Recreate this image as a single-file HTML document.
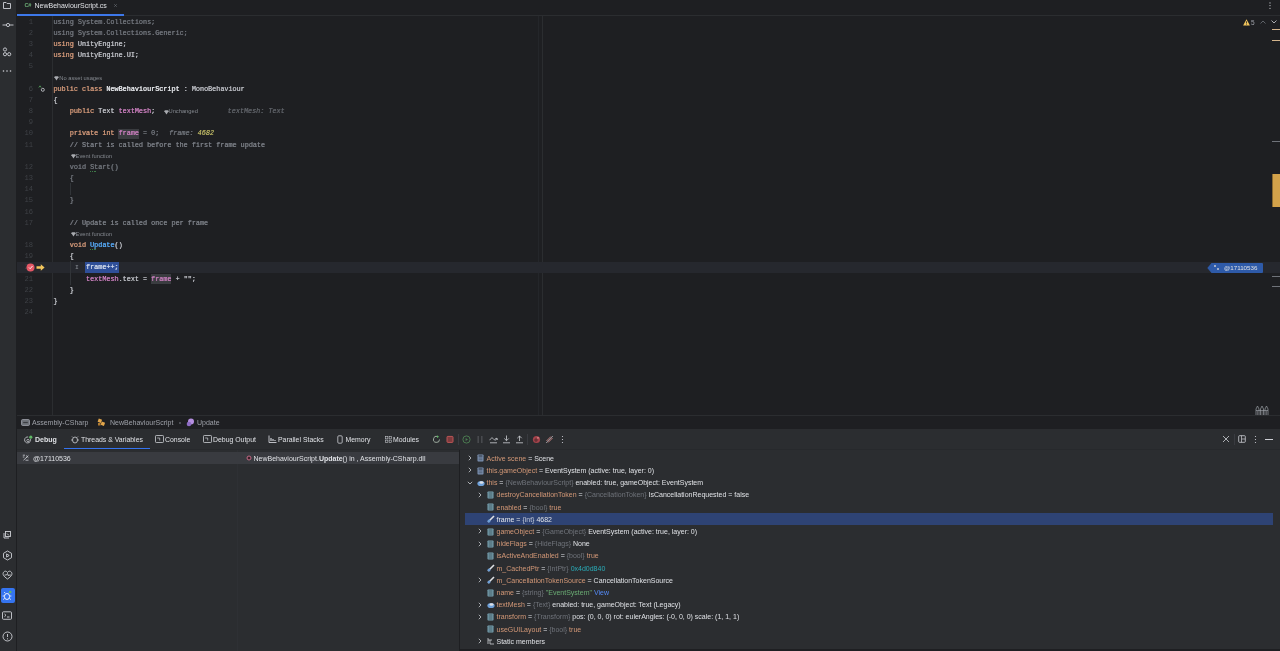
<!DOCTYPE html><html><head><meta charset="utf-8"><style>
*{margin:0;padding:0;box-sizing:border-box}
html,body{width:1280px;height:651px;overflow:hidden;background:#1e1f22;font-family:"Liberation Sans",sans-serif;color:#dfe1e5}
.a{position:absolute;white-space:pre}
.c{position:absolute;white-space:pre;font-family:"Liberation Mono",monospace;font-size:6.79px;line-height:11px;height:11px;color:#bcbec4;text-shadow:0.35px 0 0 currentColor}
.ln{position:absolute;white-space:pre;font-family:"Liberation Mono",monospace;font-size:7.1px;line-height:11px;color:#3e4146;text-align:right;width:30px}
.kw{color:#cf9677}.cm{color:#7a7e85}.fl{color:#c77dbb}.mt{color:#56a8f5}.nm{color:#2aacb8}.dim{color:#6f737a}.hv{color:#b3ae60}.sel{color:#cfd8ea}.br{color:#e6e8ec}.und{}
.h{position:absolute;white-space:pre;font-size:5.75px;color:#868a91;line-height:8px}
.u{position:absolute;white-space:pre;font-size:7px;line-height:9px;color:#dfe1e5}
.v{position:absolute;white-space:pre;font-size:7px;line-height:9px;color:#dfe1e5}
.vn{color:#d39877}.vt{color:#6f737a}.vs{color:#6aab73}.vh{color:#2aacb8}.vl{color:#548af7}
svg{position:absolute;overflow:visible}
</style></head><body><div id="root" style="position:absolute;left:0;top:0;width:1280px;height:651px;overflow:hidden;will-change:transform;background:#1e1f22">
<div class="a" style="left:0;top:0;width:16px;height:651px;background:#2b2d30"></div>
<div class="a" style="left:16px;top:0;width:1px;height:651px;background:#1e1f22"></div>
<svg style="left:2px;top:1px" width="10" height="9" viewBox="0 0 10 9"><path d="M1.5 1.5h2.6l1 1h3.4v5h-7z" fill="none" stroke="#ced0d6" stroke-width="0.9"/></svg>
<svg style="left:1.5px;top:21px" width="12" height="8" viewBox="0 0 12 8"><circle cx="6" cy="4" r="1.6" fill="none" stroke="#ced0d6" stroke-width="0.9"/><path d="M0.5 4h3.9M7.6 4h3.9" fill="none" stroke="#ced0d6" stroke-width="0.9"/></svg>
<svg style="left:2px;top:46.5px" width="10" height="10" viewBox="0 0 10 10"><circle cx="3" cy="2.5" r="1.6" fill="none" stroke="#ced0d6" stroke-width="0.9"/><circle cx="3" cy="7.2" r="1.6" fill="none" stroke="#ced0d6" stroke-width="0.9"/><circle cx="7.2" cy="7.2" r="1.6" fill="none" stroke="#ced0d6" stroke-width="0.9"/></svg>
<svg style="left:2px;top:69px" width="10" height="4" viewBox="0 0 10 4"><circle cx="1.5" cy="2" r="0.8" fill="#ced0d6"/><circle cx="5" cy="2" r="0.8" fill="#ced0d6"/><circle cx="8.5" cy="2" r="0.8" fill="#ced0d6"/></svg>
<svg style="left:2.0px;top:530px" width="10" height="10" viewBox="0 0 10 10"><path d="M2 3v5h5" fill="none" stroke="#ced0d6" stroke-width="0.9"/><rect x="3.5" y="1.5" width="5" height="5" fill="none" stroke="#ced0d6" stroke-width="0.9"/><path d="M5 3.5l2 2" fill="none" stroke="#ced0d6" stroke-width="0.9"/></svg>
<svg style="left:1.5px;top:550px" width="11" height="11" viewBox="0 0 11 11"><path d="M5.5 1l4 2.3v4.4l-4 2.3-4-2.3V3.3z" fill="none" stroke="#ced0d6" stroke-width="0.9"/><path d="M4.6 3.9v3.2l2.6-1.6z" fill="none" stroke="#ced0d6" stroke-width="0.9"/></svg>
<svg style="left:1.5px;top:570px" width="11" height="10" viewBox="0 0 11 10"><path d="M5.5 9C1 6 0.5 4 1.5 2.3 2.7 0.6 4.6 1 5.5 2.5 6.4 1 8.3 0.6 9.5 2.3 10.5 4 10 6 5.5 9z" fill="none" stroke="#ced0d6" stroke-width="0.9"/><path d="M2.5 5h2l1-1.5 1 2.5 0.8-1h1.5" fill="none" stroke="#ced0d6" stroke-width="0.9"/></svg>
<div class="a" style="left:1px;top:588px;width:14px;height:15px;background:#3574f0;border-radius:2px"></div>
<svg style="left:2.0px;top:590px" width="10" height="11" viewBox="0 0 10 11"><ellipse cx="5" cy="6.5" rx="2.6" ry="3" fill="none" stroke="#fff" stroke-width="0.9"/><path d="M3.2 3.2l-1-1.2M6.8 3.2l1-1.2M2.4 6H0.6M7.6 6h1.8M2.6 8.5l-1.5 1M7.4 8.5l1.5 1" fill="none" stroke="#fff" stroke-width="0.8"/><circle cx="8.2" cy="2" r="1.3" fill="#5fb865"/></svg>
<svg style="left:2.0px;top:611px" width="10" height="9" viewBox="0 0 10 9"><rect x="0.5" y="0.8" width="9" height="7.5" rx="1" fill="none" stroke="#ced0d6" stroke-width="0.9"/><path d="M2.5 3l1.5 1.3L2.5 5.6M5 6h2.5" fill="none" stroke="#ced0d6" stroke-width="0.9"/></svg>
<svg style="left:1.5px;top:631px" width="11" height="11" viewBox="0 0 11 11"><circle cx="5.5" cy="5.5" r="4.5" fill="none" stroke="#ced0d6" stroke-width="0.9"/><path d="M5.5 3v3" fill="none" stroke="#ced0d6" stroke-width="0.9"/><circle cx="5.5" cy="7.8" r="0.6" fill="#ced0d6"/></svg>
<div class="a" style="left:17px;top:15px;width:1263px;height:1px;background:#2b2d30"></div>
<div class="a" style="left:17px;top:14px;width:107px;height:2px;background:#3d78ea"></div>
<div class="u" style="left:24.5px;top:1px;font-size:5.6px;color:#6aab73;font-weight:bold;line-height:9px;letter-spacing:-0.3px">C#</div>
<div class="u" style="left:34.5px;top:0.5px;color:#dfe1e5">NewBehaviourScript.cs</div>
<svg style="left:113px;top:3px" width="5" height="5" viewBox="0 0 5 5"><path d="M1.2 1.2l2.6 2.6M3.8 1.2L1.2 3.8" stroke="#6f737a" stroke-width="0.6"/></svg>
<svg style="left:1268px;top:1px" width="4" height="9" viewBox="0 0 4 9"><circle cx="2" cy="1.9" r="0.6" fill="#ced0d6"/><circle cx="2" cy="4.6" r="0.6" fill="#ced0d6"/><circle cx="2" cy="7.3" r="0.6" fill="#ced0d6"/></svg>
<div class="a" style="left:52px;top:16px;width:1px;height:399px;background:#2b2d30"></div>
<div class="a" style="left:538px;top:16px;width:1px;height:399px;background:#24262a"></div>
<div class="a" style="left:542px;top:16px;width:1px;height:399px;background:#2b2d30"></div>
<div class="a" style="left:17px;top:262.43px;width:1263px;height:11px;background:#26282e"></div>
<div class="a" style="left:84.5px;top:262.13px;width:34px;height:11px;background:#2f4f98"></div>
<div class="a" style="left:118.48px;top:128.95px;width:20.37px;height:10px;background:#3a3c40"></div>
<div class="a" style="left:151.08px;top:274.09px;width:20.37px;height:10px;background:#3a3c40"></div>
<div class="a" style="left:70px;top:183.11px;width:1px;height:12.33px;background:#313438"></div>
<div class="a" style="left:70px;top:261.26px;width:1px;height:23.50px;background:#313438"></div>
<div class="ln" style="left:3px;top:16.80px">1</div>
<div class="c" style="left:53.3px;top:16.80px"><span class="dim">using System.Collections;</span></div>
<div class="ln" style="left:3px;top:27.97px">2</div>
<div class="c" style="left:53.3px;top:27.97px"><span class="dim">using System.Collections.Generic;</span></div>
<div class="ln" style="left:3px;top:39.13px">3</div>
<div class="c" style="left:53.3px;top:39.13px"><span class="kw">using</span> UnityEngine;</div>
<div class="ln" style="left:3px;top:50.30px">4</div>
<div class="c" style="left:53.3px;top:50.30px"><span class="kw">using</span> UnityEngine.UI;</div>
<div class="ln" style="left:3px;top:61.46px">5</div>
<div class="c" style="left:53.3px;top:61.46px"></div>
<div class="ln" style="left:3px;top:83.79px">6</div>
<div class="c" style="left:53.3px;top:83.79px"><span class="kw">public class</span> <span class="br">NewBehaviourScript</span> : MonoBehaviour</div>
<div class="ln" style="left:3px;top:94.95px">7</div>
<div class="c" style="left:53.3px;top:94.95px">{</div>
<div class="ln" style="left:3px;top:106.12px">8</div>
<div class="c" style="left:53.3px;top:106.12px">    <span class="kw">public</span> Text <span class="fl">textMesh</span>;</div>
<div class="ln" style="left:3px;top:117.28px">9</div>
<div class="c" style="left:53.3px;top:117.28px"></div>
<div class="ln" style="left:3px;top:128.45px">10</div>
<div class="c" style="left:53.3px;top:128.45px">    <span class="kw">private int</span> <span class="fl">frame</span><span class="dim"> = 0;</span></div>
<div class="ln" style="left:3px;top:139.62px">11</div>
<div class="c" style="left:53.3px;top:139.62px">    <span class="cm">// Start is called before the first frame update</span></div>
<div class="ln" style="left:3px;top:161.94px">12</div>
<div class="c" style="left:53.3px;top:161.94px">    <span class="dim">void </span><span class="dim und">Start</span><span class="dim">()</span></div>
<div class="ln" style="left:3px;top:173.11px">13</div>
<div class="c" style="left:53.3px;top:173.11px">    <span class="dim">{</span></div>
<div class="ln" style="left:3px;top:184.28px">14</div>
<div class="c" style="left:53.3px;top:184.28px"></div>
<div class="ln" style="left:3px;top:195.44px">15</div>
<div class="c" style="left:53.3px;top:195.44px">    <span class="dim">}</span></div>
<div class="ln" style="left:3px;top:206.60px">16</div>
<div class="c" style="left:53.3px;top:206.60px"></div>
<div class="ln" style="left:3px;top:217.77px">17</div>
<div class="c" style="left:53.3px;top:217.77px">    <span class="cm">// Update is called once per frame</span></div>
<div class="ln" style="left:3px;top:240.10px">18</div>
<div class="c" style="left:53.3px;top:240.10px">    <span class="kw">void</span> <span class="mt und">Update</span>()</div>
<div class="ln" style="left:3px;top:251.26px">19</div>
<div class="c" style="left:53.3px;top:251.26px">    {</div>
<div class="ln" style="left:3px;top:262.43px">20</div>
<div class="c" style="left:53.3px;top:262.43px">        <span class="sel">frame++;</span></div>
<div class="ln" style="left:3px;top:273.59px">21</div>
<div class="c" style="left:53.3px;top:273.59px">        <span class="fl">textMesh</span>.text = <span class="fl">frame</span> + &quot;&quot;;</div>
<div class="ln" style="left:3px;top:284.76px">22</div>
<div class="c" style="left:53.3px;top:284.76px">    }</div>
<div class="ln" style="left:3px;top:295.93px">23</div>
<div class="c" style="left:53.3px;top:295.93px">}</div>
<div class="ln" style="left:3px;top:307.09px">24</div>
<div class="c" style="left:53.3px;top:307.09px"></div>
<div class="a" style="left:90.47px;top:170.64px;width:0.9px;height:0.9px;background:#3f7a48"></div>
<div class="a" style="left:92.07px;top:170.64px;width:0.9px;height:0.9px;background:#3f7a48"></div>
<div class="a" style="left:93.67px;top:170.64px;width:0.9px;height:0.9px;background:#3f7a48"></div>
<div class="a" style="left:95.27px;top:170.64px;width:0.9px;height:0.9px;background:#3f7a48"></div>
<div class="a" style="left:90.47px;top:248.80px;width:0.9px;height:0.9px;background:#3f7a48"></div>
<div class="a" style="left:92.07px;top:248.80px;width:0.9px;height:0.9px;background:#3f7a48"></div>
<div class="a" style="left:93.67px;top:248.80px;width:0.9px;height:0.9px;background:#3f7a48"></div>
<div class="a" style="left:95.27px;top:248.80px;width:0.9px;height:0.9px;background:#3f7a48"></div>
<svg style="left:54.3px;top:76.12px" width="5" height="5" viewBox="0 0 5 5"><path d="M0.4 1.2Q0.4 0.3 1.3 0.3H3.7Q4.6 0.3 4.6 1.2L2.5 4.6z" fill="#a9abb0"/></svg>
<div class="h" style="left:59.30px;top:73.83px">No asset usages</div>
<svg style="left:70.596px;top:154.28px" width="5" height="5" viewBox="0 0 5 5"><path d="M0.4 1.2Q0.4 0.3 1.3 0.3H3.7Q4.6 0.3 4.6 1.2L2.5 4.6z" fill="#a9abb0"/></svg>
<div class="h" style="left:75.60px;top:151.98px">Event function</div>
<svg style="left:70.596px;top:232.44px" width="5" height="5" viewBox="0 0 5 5"><path d="M0.4 1.2Q0.4 0.3 1.3 0.3H3.7Q4.6 0.3 4.6 1.2L2.5 4.6z" fill="#a9abb0"/></svg>
<div class="h" style="left:75.60px;top:230.13px">Event function</div>
<svg style="left:163.5px;top:109.62px" width="5" height="5" viewBox="0 0 5 5"><path d="M0.4 1.2Q0.4 0.3 1.3 0.3H3.7Q4.6 0.3 4.6 1.2L2.5 4.6z" fill="#a9abb0"/></svg>
<div class="h" style="left:168.5px;top:107.32px">Unchanged</div>
<div class="c" style="left:227.5px;top:106.12px;color:#5d6066;font-style:italic">textMesh: Text</div>
<div class="c" style="left:169px;top:128.45px;color:#6f737a;font-style:italic">frame: <span class="hv">4682</span></div>
<svg style="left:38px;top:85.29px" width="7" height="7" viewBox="0 0 7 7"><circle cx="4.8" cy="4.8" r="1.5" fill="none" stroke="#ced0d6" stroke-width="0.8"/><path d="M0.8 2.5L2 0.8 3.2 2.5" fill="none" stroke="#5fb865" stroke-width="0.7"/></svg>
<svg style="left:26px;top:263.43px" width="9" height="9" viewBox="0 0 9 9"><circle cx="4.5" cy="4.5" r="4" fill="#e55765"/><path d="M3 4.5l1.2 1.2L6.5 3" stroke="#fff" stroke-width="0.9" fill="none"/></svg>
<svg style="left:36px;top:264.43px" width="9" height="7" viewBox="0 0 9 7"><path d="M0.5 2.3h4.3V0.3L8.6 3.5 4.8 6.7V4.7H0.5z" fill="#f2c55c"/></svg>
<div class="c" style="left:74.89px;top:262.43px;color:#6f737a;font-size:6px">I</div>
<div class="a" style="left:1212px;top:262.93px;width:51px;height:10px;background:#2e5aa8;border-radius:1px"></div>
<svg style="left:1207px;top:262.93px" width="6" height="10" viewBox="0 0 6 10"><path d="M6 0H4.5L0.3 5 4.5 10H6z" fill="#2e5aa8"/></svg>
<div class="u" style="left:1224px;top:263.13px;font-size:6.2px;color:#dfe1e5">@17110536</div>
<svg style="left:1213px;top:264.43px" width="7" height="7" viewBox="0 0 7 7"><path d="M1 1l2 2M3 1L1 3M4 4l2 2M6 4L4 6" stroke="#ced0d6" stroke-width="0.7"/></svg>
<svg style="left:1243px;top:19px" width="7" height="7" viewBox="0 0 7 7"><path d="M3.5 0.3L6.9 6.5H0.1z" fill="#f2c55c"/><path d="M3.5 2.3v2.2" stroke="#1e1f22" stroke-width="0.8"/><circle cx="3.5" cy="5.5" r="0.4" fill="#1e1f22"/></svg>
<div class="u" style="left:1251px;top:18px;font-size:6.5px;color:#9da0a8">5</div>
<svg style="left:1260px;top:20px" width="6" height="4" viewBox="0 0 6 4"><path d="M0.5 3.5L3 1l2.5 2.5" stroke="#6f737a" stroke-width="0.8" fill="none"/></svg>
<svg style="left:1271px;top:20px" width="6" height="4" viewBox="0 0 6 4"><path d="M0.5 0.5L3 3l2.5-2.5" stroke="#ced0d6" stroke-width="0.8" fill="none"/></svg>
<div class="a" style="left:1272px;top:29px;width:8px;height:1px;background:#d4b48c"></div>
<div class="a" style="left:1272px;top:40px;width:8px;height:1px;background:#d4b48c"></div>
<div class="a" style="left:1272px;top:174px;width:8px;height:33px;background:#d3a24a;border-left:1px solid #8a6a30"></div>
<div class="a" style="left:1272px;top:141px;width:8px;height:1px;background:#6f737a"></div>
<div class="a" style="left:1272px;top:276px;width:8px;height:1px;background:#6f737a"></div>
<div class="a" style="left:1272px;top:286px;width:8px;height:1px;background:#6f737a"></div>
<svg style="left:1254.5px;top:405px" width="14" height="10" viewBox="0 0 14 10"><path d="M1 10V4L2.5 1 4 4v6M5.5 10V4L7 1 8.5 4v6M10 10V4l1.5-3L13 4v6M1 5.5h12" fill="none" stroke="#9a9da3" stroke-width="0.7"/><path d="M2.5 6v4M7 6v4M11.5 6v4" stroke="#9a9da3" stroke-width="0.5"/></svg>
<div class="a" style="left:17px;top:415px;width:1263px;height:1px;background:#2b2d30"></div>
<svg style="left:21px;top:419px" width="9" height="7" viewBox="0 0 9 7"><rect x="0.5" y="0.5" width="8" height="6" rx="1.2" fill="#6f737a" stroke="#9da0a8" stroke-width="0.8"/><path d="M2.2 3.5h4.6" stroke="#3a3c40" stroke-width="1.2"/></svg>
<div class="u" style="left:32px;top:418px;color:#9da0a8">Assembly-CSharp</div>
<svg style="left:97px;top:418px" width="9" height="9" viewBox="0 0 9 9"><rect x="1" y="1" width="3.5" height="3.5" fill="#e3a64b" transform="rotate(20 3 3)"/><rect x="4" y="4" width="3.5" height="3.5" fill="#e3a64b" transform="rotate(20 6 6)"/><rect x="1" y="5" width="2.5" height="2.5" fill="#b07a30"/></svg>
<div class="u" style="left:110px;top:418px;color:#9da0a8">NewBehaviourScript</div>
<div class="a" style="left:179px;top:422px;width:1.5px;height:1.5px;background:#4b4e54"></div>
<svg style="left:186px;top:418px" width="9" height="9" viewBox="0 0 9 9"><circle cx="5" cy="3.5" r="3" fill="#b58fe0"/><circle cx="3" cy="6" r="2.3" fill="#8d6cc4"/></svg>
<div class="u" style="left:197px;top:418px;color:#9da0a8">Update</div>
<div class="a" style="left:17px;top:428px;width:1263px;height:223px;background:#2b2d30"></div>
<div class="a" style="left:17px;top:428px;width:1263px;height:1px;background:#1e1f22"></div>
<svg style="left:24px;top:434.5px" width="9" height="9" viewBox="0 0 9 9"><path d="M6.5 4.2A3 3 0 1 1 4.2 2" fill="none" stroke="#ced0d6" stroke-width="0.8"/><circle cx="4" cy="5.5" r="1.2" fill="none" stroke="#ced0d6" stroke-width="0.7"/><circle cx="6.8" cy="2.2" r="1.6" fill="#5fb865"/></svg>
<div class="u" style="left:35px;top:435px;font-weight:bold;color:#dfe1e5">Debug</div>
<svg style="left:71px;top:435px" width="8" height="9" viewBox="0 0 8 9"><ellipse cx="4" cy="5" rx="2.5" ry="3" fill="none" stroke="#ced0d6" stroke-width="0.8"/><path d="M2 2.5L1 1.5M6 2.5l1-1M1.5 5H0M6.5 5H8" stroke="#ced0d6" stroke-width="0.7"/></svg>
<div class="u" style="left:81px;top:435px;font-size:6.9px">Threads &amp; Variables</div>
<div class="a" style="left:64px;top:448px;width:86px;height:2px;background:#3574f0"></div>
<svg style="left:155px;top:435px" width="9" height="8" viewBox="0 0 9 8"><rect x="0.5" y="0.5" width="8" height="7" rx="0.8" fill="none" stroke="#ced0d6" stroke-width="0.8"/><path d="M2.2 3h2.5v2.5" stroke="#ced0d6" stroke-width="0.7" fill="none"/></svg>
<div class="u" style="left:165px;top:435px;font-size:6.9px">Console</div>
<svg style="left:202.5px;top:435px" width="9" height="8" viewBox="0 0 9 8"><rect x="0.5" y="0.5" width="8" height="7" rx="0.8" fill="none" stroke="#ced0d6" stroke-width="0.8"/><path d="M2.2 3h2.5v2.5" stroke="#ced0d6" stroke-width="0.7" fill="none"/></svg>
<div class="u" style="left:213px;top:435px;font-size:6.9px">Debug Output</div>
<svg style="left:268px;top:435px" width="9" height="8" viewBox="0 0 9 8"><path d="M1 0.5v7h7.5" stroke="#ced0d6" stroke-width="0.9" fill="none"/><path d="M3 3v3M5 4v2M7 5v1" stroke="#ced0d6" stroke-width="1.2"/></svg>
<div class="u" style="left:278px;top:435px;font-size:6.9px">Parallel Stacks</div>
<svg style="left:337px;top:435px" width="6" height="9" viewBox="0 0 6 9"><rect x="0.8" y="0.8" width="4.4" height="7.4" rx="1" fill="none" stroke="#ced0d6" stroke-width="0.8"/></svg>
<div class="u" style="left:345.5px;top:435px;font-size:6.9px">Memory</div>
<svg style="left:384.5px;top:436px" width="7" height="7" viewBox="0 0 9 9"><rect x="0.7" y="0.7" width="3" height="3" fill="none" stroke="#ced0d6" stroke-width="0.7"/><rect x="5.3" y="0.7" width="3" height="3" fill="none" stroke="#ced0d6" stroke-width="0.7"/><rect x="0.7" y="5.3" width="3" height="3" fill="none" stroke="#ced0d6" stroke-width="0.7"/><rect x="5.3" y="5.3" width="3" height="3" fill="none" stroke="#ced0d6" stroke-width="0.7"/></svg>
<div class="u" style="left:393px;top:435px;font-size:6.9px">Modules</div>
<svg style="left:432px;top:435px" width="9" height="9" viewBox="0 0 9 9"><path d="M7.5 4.5A3 3 0 1 1 5.5 1.6" fill="none" stroke="#a9b8aa" stroke-width="0.9"/><path d="M5 0.2l2 1.5-2 1.3z" fill="#5fb865"/></svg>
<svg style="left:446px;top:435px" width="8" height="9" viewBox="0 0 8 9"><rect x="1" y="1.4" width="6" height="6" rx="0.8" fill="#7d3a3d" stroke="#c75a5a" stroke-width="0.9"/></svg>
<div class="a" style="left:458px;top:434px;width:1px;height:11px;background:#393b40"></div>
<svg style="left:462px;top:435px" width="9" height="9" viewBox="0 0 9 9"><circle cx="4.5" cy="4.5" r="3.6" fill="none" stroke="#4a7a50" stroke-width="1"/><path d="M3.6 3v3l2.4-1.5z" fill="#4a7a50"/></svg>
<svg style="left:476px;top:435px" width="8" height="9" viewBox="0 0 8 9"><path d="M2.2 1v7M5.8 1v7" stroke="#4a4c50" stroke-width="1.5"/></svg>
<svg style="left:489px;top:435px" width="9" height="9" viewBox="0 0 9 9"><path d="M0.8 5.2C2 2.5 3.5 2.5 4.5 4S7 5.5 8 3.5" fill="none" stroke="#ced0d6" stroke-width="0.8"/><path d="M6.3 3.6L8 3.3 8.4 5" fill="none" stroke="#ced0d6" stroke-width="0.8"/><path d="M1 7.8h7" fill="none" stroke="#ced0d6" stroke-width="0.8"/></svg>
<svg style="left:502px;top:435px" width="9" height="9" viewBox="0 0 9 9"><path d="M4.5 0.5v5M2.3 3.5l2.2 2.2 2.2-2.2M1 7.8h7" fill="none" stroke="#ced0d6" stroke-width="0.8"/></svg>
<svg style="left:515px;top:435px" width="9" height="9" viewBox="0 0 9 9"><path d="M4.5 6V1M2.3 3.2L4.5 1l2.2 2.2M1 7.8h7" fill="none" stroke="#ced0d6" stroke-width="0.8"/></svg>
<div class="a" style="left:527px;top:434px;width:1px;height:11px;background:#393b40"></div>
<svg style="left:532px;top:435px" width="9" height="9" viewBox="0 0 9 9"><circle cx="4.5" cy="4.5" r="3.6" fill="#a4434b"/><circle cx="4" cy="5" r="1.5" fill="#3a2226"/><circle cx="4" cy="5" r="0.7" fill="#c44a52"/><circle cx="6" cy="2.8" r="0.9" fill="#d98a8a"/></svg>
<svg style="left:545px;top:435px" width="9" height="9" viewBox="0 0 9 9"><path d="M1.5 6l4.5-4.5M3 7.5l4.5-4.5" stroke="#d98a8a" stroke-width="0.9"/><path d="M1 8L8 1" stroke="#ced0d6" stroke-width="0.6"/></svg>
<svg style="left:561px;top:435px" width="3" height="9" viewBox="0 0 3 9"><circle cx="1.5" cy="1.5" r="0.6" fill="#ced0d6"/><circle cx="1.5" cy="4.5" r="0.6" fill="#ced0d6"/><circle cx="1.5" cy="7.5" r="0.6" fill="#ced0d6"/></svg>
<svg style="left:1222px;top:435px" width="8" height="8" viewBox="0 0 8 8"><path d="M1 1l6 6M7 1L1 7" stroke="#ced0d6" stroke-width="0.8"/></svg>
<div class="a" style="left:1234px;top:434px;width:1px;height:11px;background:#393b40"></div>
<svg style="left:1238px;top:435px" width="8" height="8" viewBox="0 0 8 8"><rect x="0.7" y="0.7" width="6.6" height="6.6" rx="0.8" fill="none" stroke="#ced0d6" stroke-width="0.8"/><path d="M3.5 0.7v6.6M3.5 4h3.8" stroke="#ced0d6" stroke-width="0.7"/></svg>
<svg style="left:1254px;top:435px" width="3" height="9" viewBox="0 0 3 9"><circle cx="1.5" cy="1.5" r="0.6" fill="#ced0d6"/><circle cx="1.5" cy="4.5" r="0.6" fill="#ced0d6"/><circle cx="1.5" cy="7.5" r="0.6" fill="#ced0d6"/></svg>
<div class="a" style="left:1265px;top:439px;width:8px;height:1px;background:#ced0d6"></div>
<div class="a" style="left:17px;top:449px;width:1263px;height:1px;background:#27292c"></div>
<div class="a" style="left:17px;top:450px;width:1263px;height:1px;background:#2b2d30"></div>
<div class="a" style="left:237px;top:450px;width:1px;height:201px;background:#2e3034"></div>
<div class="a" style="left:459px;top:450px;width:1px;height:201px;background:#1e1f22"></div>
<div class="a" style="left:17px;top:452px;width:442px;height:12px;background:#393b40"></div>
<svg style="left:22px;top:454px" width="7" height="7" viewBox="0 0 7 7"><path d="M0.8 1.2h2.2M0.8 3h1.6M4.2 1.5l2.2 2.2M6.4 1.5L4.2 3.7M1.5 6.2L5.5 2.5M3.5 6.2h3" stroke="#ced0d6" stroke-width="0.8"/></svg>
<div class="u" style="left:33px;top:453.5px">@17110536</div>
<svg style="left:246px;top:455px" width="6" height="6" viewBox="0 0 6 6"><circle cx="3" cy="3" r="2" fill="#3a1f28" stroke="#c26a86" stroke-width="1"/></svg>
<div class="u" style="left:253.5px;top:453.5px">NewBehaviourScript.<b>Update</b>() in , Assembly-CSharp.dll</div>
<svg style="left:468px;top:455.20px" width="4" height="6" viewBox="0 0 4 6"><path d="M0.8 0.8L3 3 0.8 5.2" fill="none" stroke="#ced0d6" stroke-width="0.8"/></svg>
<svg style="left:476.5px;top:454.40px" width="7" height="8" viewBox="0 0 7 8"><rect x="0.5" y="0.5" width="6" height="7" rx="0.7" fill="#7d93b3"/><rect x="1.5" y="1.3" width="4" height="1.4" fill="#3c4656"/><path d="M1.5 4h4M1.5 5.8h4" stroke="#3c4656" stroke-width="0.7"/></svg>
<div class="v" style="left:486.5px;top:453.70px"><span class="vn" style="">Active scene</span> = Scene</div>
<svg style="left:468px;top:467.40px" width="4" height="6" viewBox="0 0 4 6"><path d="M0.8 0.8L3 3 0.8 5.2" fill="none" stroke="#ced0d6" stroke-width="0.8"/></svg>
<svg style="left:476.5px;top:466.60px" width="7" height="8" viewBox="0 0 7 8"><rect x="0.5" y="0.5" width="6" height="7" rx="0.7" fill="#7d93b3"/><rect x="1.5" y="1.3" width="4" height="1.4" fill="#3c4656"/><path d="M1.5 4h4M1.5 5.8h4" stroke="#3c4656" stroke-width="0.7"/></svg>
<div class="v" style="left:486.5px;top:465.90px"><span class="vn" style="">this.gameObject</span> = EventSystem (active: true, layer: 0)</div>
<svg style="left:467px;top:480.60px" width="6" height="4" viewBox="0 0 6 4"><path d="M0.8 0.8L3 3 5.2 0.8" fill="none" stroke="#ced0d6" stroke-width="0.8"/></svg>
<svg style="left:477px;top:478.60px" width="8" height="8" viewBox="0 0 8 8"><ellipse cx="4" cy="4.5" rx="3.6" ry="2.6" fill="#6ea0d8"/><ellipse cx="4.5" cy="3.5" rx="2" ry="1.2" fill="#dfe1e5"/></svg>
<div class="v" style="left:486.5px;top:478.10px"><span class="vn" style="">this</span> = <span class="vt" style="">{NewBehaviourScript}</span> enabled: true, gameObject: EventSystem</div>
<svg style="left:478px;top:491.80px" width="4" height="6" viewBox="0 0 4 6"><path d="M0.8 0.8L3 3 0.8 5.2" fill="none" stroke="#ced0d6" stroke-width="0.8"/></svg>
<svg style="left:486.5px;top:491.00px" width="7" height="8" viewBox="0 0 7 8"><rect x="0.5" y="0.5" width="6" height="7" rx="0.7" fill="#78a3b2"/><path d="M1.5 2h4M1.5 4h4M1.5 6h4" stroke="#34444c" stroke-width="0.8"/></svg>
<div class="v" style="left:496.5px;top:490.30px"><span class="vn" style="">destroyCancellationToken</span> = <span class="vt" style="">{CancellationToken}</span> IsCancellationRequested = false</div>
<svg style="left:486.5px;top:503.20px" width="7" height="8" viewBox="0 0 7 8"><rect x="0.5" y="0.5" width="6" height="7" rx="0.7" fill="#78a3b2"/><path d="M1.5 2h4M1.5 4h4M1.5 6h4" stroke="#34444c" stroke-width="0.8"/></svg>
<div class="v" style="left:496.5px;top:502.50px"><span class="vn" style="">enabled</span> = <span class="vt" style="">{bool}</span> <span class="vn">true</span></div>
<div class="a" style="left:465px;top:512.50px;width:808px;height:12.5px;background:#2e4374"></div>
<svg style="left:487px;top:515.20px" width="8" height="8" viewBox="0 0 8 8"><path d="M1 7L7 1" stroke="#dfe1e5" stroke-width="1.6"/><circle cx="2" cy="6" r="1.5" fill="#6ea0d8"/></svg>
<div class="v" style="left:496.5px;top:514.70px"><span class="vn" style="color:#e6e8ec">frame</span> = <span class="vt" style="color:#c0c8d8">{int}</span> 4682</div>
<svg style="left:478px;top:528.40px" width="4" height="6" viewBox="0 0 4 6"><path d="M0.8 0.8L3 3 0.8 5.2" fill="none" stroke="#ced0d6" stroke-width="0.8"/></svg>
<svg style="left:486.5px;top:527.60px" width="7" height="8" viewBox="0 0 7 8"><rect x="0.5" y="0.5" width="6" height="7" rx="0.7" fill="#78a3b2"/><path d="M1.5 2h4M1.5 4h4M1.5 6h4" stroke="#34444c" stroke-width="0.8"/></svg>
<div class="v" style="left:496.5px;top:526.90px"><span class="vn" style="">gameObject</span> = <span class="vt" style="">{GameObject}</span> EventSystem (active: true, layer: 0)</div>
<svg style="left:478px;top:540.60px" width="4" height="6" viewBox="0 0 4 6"><path d="M0.8 0.8L3 3 0.8 5.2" fill="none" stroke="#ced0d6" stroke-width="0.8"/></svg>
<svg style="left:486.5px;top:539.80px" width="7" height="8" viewBox="0 0 7 8"><rect x="0.5" y="0.5" width="6" height="7" rx="0.7" fill="#78a3b2"/><path d="M1.5 2h4M1.5 4h4M1.5 6h4" stroke="#34444c" stroke-width="0.8"/></svg>
<div class="v" style="left:496.5px;top:539.10px"><span class="vn" style="">hideFlags</span> = <span class="vt" style="">{HideFlags}</span> None</div>
<svg style="left:486.5px;top:552.00px" width="7" height="8" viewBox="0 0 7 8"><rect x="0.5" y="0.5" width="6" height="7" rx="0.7" fill="#78a3b2"/><path d="M1.5 2h4M1.5 4h4M1.5 6h4" stroke="#34444c" stroke-width="0.8"/></svg>
<div class="v" style="left:496.5px;top:551.30px"><span class="vn" style="">isActiveAndEnabled</span> = <span class="vt" style="">{bool}</span> <span class="vn">true</span></div>
<svg style="left:487px;top:564.00px" width="8" height="8" viewBox="0 0 8 8"><path d="M1 7L7 1" stroke="#dfe1e5" stroke-width="1.6"/><circle cx="2" cy="6" r="1.5" fill="#6ea0d8"/></svg>
<div class="v" style="left:496.5px;top:563.50px"><span class="vn" style="">m_CachedPtr</span> = <span class="vt" style="">{IntPtr}</span> <span class="vh">0x4d0d840</span></div>
<svg style="left:478px;top:577.20px" width="4" height="6" viewBox="0 0 4 6"><path d="M0.8 0.8L3 3 0.8 5.2" fill="none" stroke="#ced0d6" stroke-width="0.8"/></svg>
<svg style="left:487px;top:576.20px" width="8" height="8" viewBox="0 0 8 8"><path d="M1 7L7 1" stroke="#dfe1e5" stroke-width="1.6"/><circle cx="2" cy="6" r="1.5" fill="#6ea0d8"/></svg>
<div class="v" style="left:496.5px;top:575.70px"><span class="vn" style="">m_CancellationTokenSource</span> = CancellationTokenSource</div>
<svg style="left:486.5px;top:588.60px" width="7" height="8" viewBox="0 0 7 8"><rect x="0.5" y="0.5" width="6" height="7" rx="0.7" fill="#78a3b2"/><path d="M1.5 2h4M1.5 4h4M1.5 6h4" stroke="#34444c" stroke-width="0.8"/></svg>
<div class="v" style="left:496.5px;top:587.90px"><span class="vn" style="">name</span> = <span class="vt" style="">{string}</span> <span class="vs">"EventSystem"</span> <span class="vl">View</span></div>
<svg style="left:478px;top:601.60px" width="4" height="6" viewBox="0 0 4 6"><path d="M0.8 0.8L3 3 0.8 5.2" fill="none" stroke="#ced0d6" stroke-width="0.8"/></svg>
<svg style="left:487px;top:600.60px" width="8" height="8" viewBox="0 0 8 8"><ellipse cx="4" cy="4.5" rx="3.6" ry="2.6" fill="#6ea0d8"/><ellipse cx="4.5" cy="3.5" rx="2" ry="1.2" fill="#dfe1e5"/></svg>
<div class="v" style="left:496.5px;top:600.10px"><span class="vn" style="">textMesh</span> = <span class="vt" style="">{Text}</span> enabled: true, gameObject: Text (Legacy)</div>
<svg style="left:478px;top:613.80px" width="4" height="6" viewBox="0 0 4 6"><path d="M0.8 0.8L3 3 0.8 5.2" fill="none" stroke="#ced0d6" stroke-width="0.8"/></svg>
<svg style="left:486.5px;top:613.00px" width="7" height="8" viewBox="0 0 7 8"><rect x="0.5" y="0.5" width="6" height="7" rx="0.7" fill="#78a3b2"/><path d="M1.5 2h4M1.5 4h4M1.5 6h4" stroke="#34444c" stroke-width="0.8"/></svg>
<div class="v" style="left:496.5px;top:612.30px"><span class="vn" style="">transform</span> = <span class="vt" style="">{Transform}</span> pos: (0, 0, 0) rot: eulerAngles: (-0, 0, 0) scale: (1, 1, 1)</div>
<svg style="left:486.5px;top:625.20px" width="7" height="8" viewBox="0 0 7 8"><rect x="0.5" y="0.5" width="6" height="7" rx="0.7" fill="#78a3b2"/><path d="M1.5 2h4M1.5 4h4M1.5 6h4" stroke="#34444c" stroke-width="0.8"/></svg>
<div class="v" style="left:496.5px;top:624.50px"><span class="vn" style="">useGUILayout</span> = <span class="vt" style="">{bool}</span> <span class="vn">true</span></div>
<svg style="left:478px;top:638.20px" width="4" height="6" viewBox="0 0 4 6"><path d="M0.8 0.8L3 3 0.8 5.2" fill="none" stroke="#ced0d6" stroke-width="0.8"/></svg>
<svg style="left:487px;top:637.20px" width="8" height="8" viewBox="0 0 8 8"><path d="M1 1v6M1 3h4M3 3v4h4" stroke="#ced0d6" stroke-width="0.8" fill="none"/></svg>
<div class="v" style="left:496.5px;top:636.70px">Static members</div>
<div class="a" style="left:459px;top:649px;width:821px;height:2px;background:#1e1f22"></div>
</div></body></html>
